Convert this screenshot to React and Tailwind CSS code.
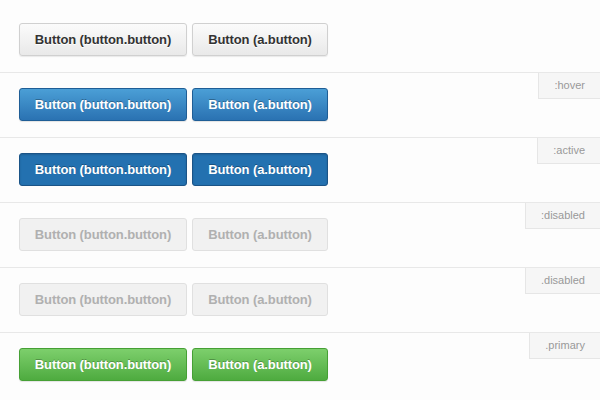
const variants = [
  {
    tag: null,
    cls: 'border-[#d0d0d0] bg-gradient-to-b from-[#fbfbfb] to-[#e9e9e9] text-[#333] [text-shadow:0_1px_0_#fff] shadow-[0_1px_1px_rgba(0,0,0,0.08)]',
  },
  {
    tag: ':hover',
    cls: 'border-[#1f5e96] bg-gradient-to-b from-[#4b9fd6] to-[#2a72b2] text-white [text-shadow:0_-1px_0_rgba(0,0,0,0.3)] shadow-[0_1px_1px_rgba(0,0,0,0.1)]',
  },
  {
    tag: ':active',
    cls: 'border-[#1b5487] bg-[#2371b0] text-white [text-shadow:0_-1px_0_rgba(0,0,0,0.3)] shadow-[inset_0_1px_2px_rgba(0,0,0,0.15)]',
  },
  {
    tag: ':disabled',
    cls: 'border-[#e0e0e0] bg-[#f1f1f1] text-[#b0b0b0]',
  },
  {
    tag: '.disabled',
    cls: 'border-[#e0e0e0] bg-[#f1f1f1] text-[#b0b0b0]',
  },
  {
    tag: '.primary',
    cls: 'border-[#46a035] bg-gradient-to-b from-[#7dcf6c] to-[#4eab3f] text-white [text-shadow:0_-1px_0_rgba(0,0,0,0.25)] shadow-[0_1px_1px_rgba(0,0,0,0.1)]',
  },
];

function Button({ cls, width, children }) {
  return (
    <span
      className={`flex h-[33px] items-center justify-center whitespace-nowrap rounded-[3px] border text-[13px] font-bold tracking-[-0.1px] ${width} ${cls}`}
    >
      {children}
    </span>
  );
}

export default function App() {
  return (
    <div className="min-h-[400px] w-[600px] bg-[#fdfdfd] font-['Liberation_Sans',Arial,sans-serif]">
      {variants.map((v, i) => (
        <div
          key={i}
          className={`relative pb-[16px] pl-[19px] ${i === 0 ? 'pt-[23px]' : 'border-t border-[#e8e8e8] pt-[15px]'}`}
        >
          <div className="flex gap-[5px]">
            <Button cls={v.cls} width="w-[168px]">Button (button.button)</Button>
            <Button cls={v.cls} width="w-[136px]">Button (a.button)</Button>
          </div>
          {v.tag && (
            <span className="absolute right-0 top-0 h-[26px] border-b border-l border-[#e6e6e6] bg-[#f6f6f6] px-[15px] text-[11px] leading-[25px] text-[#999]">
              {v.tag}
            </span>
          )}
        </div>
      ))}
    </div>
  );
}
